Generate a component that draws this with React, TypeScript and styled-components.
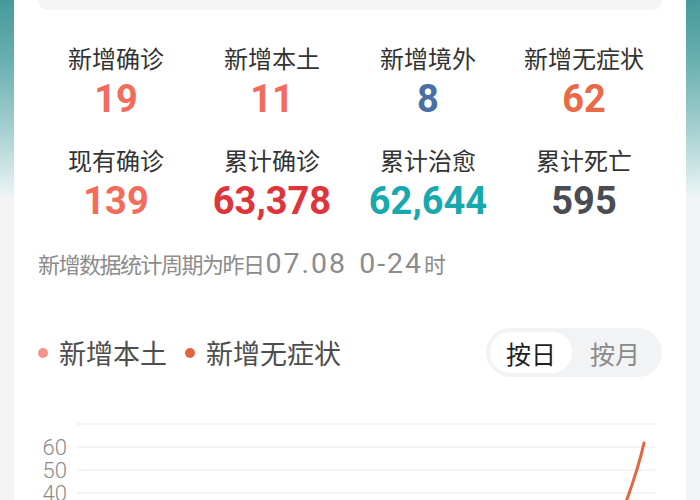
import React from "react";
import styled, { createGlobalStyle } from "styled-components";

const GlobalStyle = createGlobalStyle`
  html, body {
    margin: 0;
    padding: 0;
    overflow: hidden;
  }
  body {
    font-family: "Noto Sans CJK SC", "Noto Sans", sans-serif;
    background: linear-gradient(
      to bottom,
      #469a9b 0px,
      #6aafb0 60px,
      #a6d0d0 130px,
      #e9f3f3 194px,
      #f2f3f5 198px,
      #f2f3f5 100%
    );
    background-repeat: no-repeat;
    background-color: #f2f3f5;
  }
`;

const Card = styled.main`
  margin: 0 14px;
  min-height: 100vh;
  background: #ffffff;
  padding: 0 24px;
  box-sizing: border-box;
`;

const TopPanel = styled.div`
  height: 10px;
  background: #f5f5f5;
  border-radius: 0 0 12px 12px;
`;

const StatsGrid = styled.section`
  display: grid;
  grid-template-columns: repeat(4, 1fr);
  row-gap: 24px;
  padding-top: 33px;
`;

const Stat = styled.div`
  display: flex;
  flex-direction: column;
  align-items: center;
`;

const StatLabel = styled.div`
  font-size: 24px;
  line-height: 30px;
  color: #333333;
`;

const StatValue = styled.div<{ $color: string }>`
  margin-top: 4px;
  font-family: Roboto, "Liberation Sans", sans-serif;
  font-weight: 700;
  font-size: 38px;
  line-height: 44px;
  color: ${(p) => p.$color};
`;

const Footnote = styled.div`
  margin-top: 26px;
  height: 28px;
  display: flex;
  align-items: baseline;
  font-size: 22px;
  letter-spacing: -1.5px;
  line-height: 28px;
  color: #8c8c8c;
  white-space: nowrap;
`;

const Stamp = styled.span`
  font-family: Roboto, "Liberation Sans", sans-serif;
  font-weight: 400;
  font-size: 28.5px;
  line-height: 28px;
  letter-spacing: 2px;
  word-spacing: 3px;
  margin: 0 1px 0 2px;
`;

const ChartHeader = styled.div`
  margin-top: 51px;
  height: 49px;
  display: flex;
  align-items: center;
  justify-content: space-between;
`;

const Legend = styled.div`
  display: flex;
  align-items: center;
  gap: 18px;
`;

const LegendItem = styled.div`
  display: flex;
  align-items: center;
  gap: 11px;
  font-size: 27px;
  line-height: 34px;
  color: #4d4d4d;
`;

const Dot = styled.span<{ $color: string }>`
  width: 10px;
  height: 10px;
  border-radius: 50%;
  background: ${(p) => p.$color};
`;

const Toggle = styled.div`
  display: flex;
  align-items: center;
  height: 49px;
  padding: 4px;
  box-sizing: border-box;
  border-radius: 25px;
  background: #f2f3f5;
`;

const ToggleOption = styled.div<{ $active?: boolean }>`
  width: ${(p) => (p.$active ? "82px" : "86px")};
  height: 41px;
  display: flex;
  align-items: center;
  justify-content: center;
  border-radius: 21px;
  font-size: 25px;
  color: ${(p) => (p.$active ? "#1f1f1f" : "#8a8a8a")};
  background: ${(p) => (p.$active ? "#ffffff" : "transparent")};
`;

const Chart = styled.svg`
  display: block;
  margin-top: 23px;
  width: 100%;
  height: 100px;
  overflow: hidden;
`;

const AxisLabel = styled.text`
  font-family: Roboto, "Liberation Sans", sans-serif;
  font-weight: 300;
  font-size: 22px;
  fill: #8a8a8a;
`;

const stats = [
  { label: "新增确诊", value: "19", color: "#f26b5b" },
  { label: "新增本土", value: "11", color: "#f26b5b" },
  { label: "新增境外", value: "8", color: "#4a6ea6" },
  { label: "新增无症状", value: "62", color: "#e86a46" },
  { label: "现有确诊", value: "139", color: "#f26b5b" },
  { label: "累计确诊", value: "63,378", color: "#e0343b" },
  { label: "累计治愈", value: "62,644", color: "#17a9ae" },
  { label: "累计死亡", value: "595", color: "#4a4c53" },
];

const grid = [
  { y: 24, label: "" },
  { y: 47, label: "60" },
  { y: 70, label: "50" },
  { y: 93, label: "40" },
];

export default function App() {
  return (
    <>
      <GlobalStyle />
      <Card>
        <TopPanel />
        <StatsGrid>
          {stats.map((s) => (
            <Stat key={s.label}>
              <StatLabel>{s.label}</StatLabel>
              <StatValue $color={s.color}>{s.value}</StatValue>
            </Stat>
          ))}
        </StatsGrid>
        <Footnote>
          新增数据统计周期为昨日<Stamp>07.08 0-24</Stamp>时
        </Footnote>
        <ChartHeader>
          <Legend>
            <LegendItem>
              <Dot $color="#f4958a" />
              新增本土
            </LegendItem>
            <LegendItem>
              <Dot $color="#e2673f" />
              新增无症状
            </LegendItem>
          </Legend>
          <Toggle>
            <ToggleOption $active>按日</ToggleOption>
            <ToggleOption>按月</ToggleOption>
          </Toggle>
        </ChartHeader>
        <Chart viewBox="0 0 624 100" preserveAspectRatio="none">
          {grid.map((g) => (
            <g key={g.y}>
              <line x1={39} x2={617} y1={g.y} y2={g.y} stroke="#f0f0f0" strokeWidth={1.5} />
              {g.label && (
                <AxisLabel x={29} y={g.y} textAnchor="end" dominantBaseline="central">
                  {g.label}
                </AxisLabel>
              )}
            </g>
          ))}
          <path
            d="M 582 118 C 592 92, 600 70, 606 43"
            fill="none"
            stroke="#e2673f"
            strokeWidth={3}
            strokeLinecap="round"
          />
        </Chart>
      </Card>
    </>
  );
}
